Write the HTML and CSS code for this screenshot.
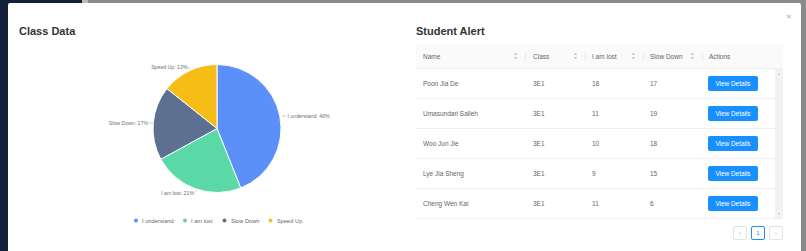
FILE: index.html
```html
<!DOCTYPE html>
<html lang="en">
<head>
    <meta charset="UTF-8">
    <meta name="viewport" content="width=device-width, initial-scale=1.0">
    <title>Class Data</title>
    <link rel="stylesheet" href="styles.css">
</head>
<body>
    <div class="page">
        <div class="sidebar"></div>
        <div class="topbar-edge"></div>
        <div class="main"></div>
    </div>

    <div class="modal">
        <button class="close" aria-label="Close">&#x2715;</button>
        <div class="modal-body">
            <div class="chart-panel">
                <h2>Class Data</h2>
                <svg class="pie" width="397" height="200" viewBox="0 0 397 200">
                    <g transform="translate(-19 -44)">
                        <path d="M217,128.5 L217,64.5 A64,64 0 0 1 240.73,187.94 Z" fill="#5b8ff9" stroke="#fff" stroke-width="1"/>
                        <path d="M217,128.5 L240.73,187.94 A64,64 0 0 1 160.85,159.21 Z" fill="#5ad8a6" stroke="#fff" stroke-width="1"/>
                        <path d="M217,128.5 L160.85,159.21 A64,64 0 0 1 166.96,88.6 Z" fill="#5d7092" stroke="#fff" stroke-width="1"/>
                        <path d="M217,128.5 L166.96,88.6 A64,64 0 0 1 217,64.5 Z" fill="#f6bd16" stroke="#fff" stroke-width="1"/>

                        <g class="leader">
                            <line x1="282" y1="116" x2="286" y2="116"/>
                            <line x1="188" y1="67.5" x2="191" y2="69.5"/>
                            <line x1="149" y1="123" x2="153" y2="123"/>
                            <line x1="195" y1="192.5" x2="197" y2="190.5"/>
                        </g>
                        <g class="label">
                            <text x="287.5" y="118">I understand: 40%</text>
                            <text x="187.5" y="69" text-anchor="end">Speed Up: 13%</text>
                            <text x="148" y="125" text-anchor="end">Slow Down: 17%</text>
                            <text x="194" y="195" text-anchor="end">I am lost: 21%</text>
                        </g>

                        <g class="legend">
                            <circle cx="136" cy="220.5" r="2" fill="#5b8ff9"/>
                            <text x="142" y="222.5">I understand</text>
                            <circle cx="185" cy="220.5" r="2" fill="#5ad8a6"/>
                            <text x="191" y="222.5">I am lost</text>
                            <circle cx="224.5" cy="220.5" r="2" fill="#5d7092"/>
                            <text x="231" y="222.5">Slow Down</text>
                            <circle cx="270.5" cy="220.5" r="2" fill="#f6bd16"/>
                            <text x="277" y="222.5">Speed Up</text>
                        </g>
                    </g>
                </svg>
            </div>

            <div class="alert-panel">
                <h2>Student Alert</h2>
                <div class="table">
                    <div class="thead">
                        <div class="th">Name <span class="sorter"></span></div>
                        <div class="th">Class <span class="sorter"></span></div>
                        <div class="th">I am lost <span class="sorter"></span></div>
                        <div class="th">Slow Down <span class="sorter"></span></div>
                        <div class="th">Actions</div>
                    </div>
                    <div class="tbody">
                        <div class="rows">
                            <div class="tr">
                                <div class="td">Poon Jia De</div>
                                <div class="td">3E1</div>
                                <div class="td">18</div>
                                <div class="td">17</div>
                                <div class="td"><button class="btn">View Details</button></div>
                            </div>
                            <div class="tr">
                                <div class="td">Umasundari Salleh</div>
                                <div class="td">3E1</div>
                                <div class="td">11</div>
                                <div class="td">19</div>
                                <div class="td"><button class="btn">View Details</button></div>
                            </div>
                            <div class="tr">
                                <div class="td">Woo Jun Jie</div>
                                <div class="td">3E1</div>
                                <div class="td">10</div>
                                <div class="td">18</div>
                                <div class="td"><button class="btn">View Details</button></div>
                            </div>
                            <div class="tr">
                                <div class="td">Lye Jia Sheng</div>
                                <div class="td">3E1</div>
                                <div class="td">9</div>
                                <div class="td">15</div>
                                <div class="td"><button class="btn">View Details</button></div>
                            </div>
                            <div class="tr">
                                <div class="td">Cheng Wen Kai</div>
                                <div class="td">3E1</div>
                                <div class="td">11</div>
                                <div class="td">6</div>
                                <div class="td"><button class="btn">View Details</button></div>
                            </div>
                        </div>
                        <div class="scrollbar">
                            <span class="arrow-up"></span>
                            <span class="arrow-down"></span>
                        </div>
                    </div>
                </div>
                <div class="pager">
                    <span class="page-item disabled">&lsaquo;</span>
                    <span class="page-item active">1</span>
                    <span class="page-item disabled">&rsaquo;</span>
                </div>
            </div>
        </div>
    </div>
</body>
</html>
```

FILE: styles.css
```css
html, body {
    margin: 0;
    height: 100%;
    overflow: hidden;
}
body {
    font-family: 'Liberation Sans', Arial, sans-serif;
    background-color: #8a8a8a;
    color: #333;
}
.page {
    display: flex;
    height: 100%;
}
.sidebar {
    width: 82px;
    background-color: #13203a;
}
.topbar-edge {
    width: 6px;
    background-color: #b9b9b9;
}
.main {
    flex: 1;
    background-color: #8a8a8a;
}

/* modal sits over the dimmed page */
.modal {
    position: absolute;
    left: 8px;
    top: 3px;
    width: 793px;
    height: 260px;
    background: #fff;
    border-radius: 2px;
}
.close {
    position: absolute;
    right: 9px;
    top: 9px;
    border: none;
    background: none;
    padding: 0;
    color: #b0b0b0;
    font-size: 7px;
    line-height: 9px;
    cursor: pointer;
}
.modal-body {
    display: flex;
    padding: 22px 18px 0 11px;
}
h2 {
    margin: 0 0 6px;
    font-size: 11px;
    line-height: 13px;
    font-weight: bold;
    color: #333;
}
.chart-panel {
    width: 397px;
}
.pie {
    display: block;
}
.leader line {
    stroke: #aaa;
    stroke-width: 0.6;
}
.label text {
    font-size: 5.2px;
    fill: #6f6f6f;
}
.legend text {
    font-size: 5.7px;
    fill: #666;
}

.alert-panel {
    width: 367px;
}
.table {
    font-size: 6.5px;
    color: #666;
}
.thead {
    display: grid;
    grid-template-columns: 109px 60px 58px 59px 81px;
    height: 25px;
    background-color: #fafafa;
    border-bottom: 1px solid #f0f0f0;
    box-sizing: border-box;
}
.th {
    position: relative;
    display: flex;
    align-items: center;
    justify-content: space-between;
    padding: 0 8px 0 7px;
    color: #666;
}
.th + .th::before {
    content: '';
    position: absolute;
    left: 0;
    top: 8px;
    width: 1px;
    height: 9px;
    background-color: #ececec;
}
.th:nth-child(2) {
    padding-left: 8px;
}
.sorter {
    width: 3px;
    height: 6px;
    display: flex;
    flex-direction: column;
    justify-content: space-between;
}
.sorter::before,
.sorter::after {
    content: '';
    border-left: 1.5px solid transparent;
    border-right: 1.5px solid transparent;
}
.sorter::before {
    border-bottom: 2px solid #c4c4c4;
}
.sorter::after {
    border-top: 2px solid #c4c4c4;
}

.tbody {
    display: flex;
}
.rows {
    width: 359px;
}
.tr {
    display: grid;
    grid-template-columns: 109px 60px 58px 59px 73px;
    height: 30px;
    border-bottom: 1px solid #f0f0f0;
    box-sizing: border-box;
}
.td {
    display: flex;
    align-items: center;
    padding-left: 7px;
}
.td:nth-child(2) {
    padding-left: 8px;
}
.td:last-child {
    padding-left: 6px;
}
.btn {
    width: 50px;
    height: 15px;
    padding: 0;
    border: none;
    border-radius: 2px;
    background-color: #1890ff;
    color: #fff;
    font-family: inherit;
    font-size: 6.4px;
    cursor: pointer;
}
.scrollbar {
    width: 8px;
    background-color: #f1f1f1;
    display: flex;
    flex-direction: column;
    justify-content: space-between;
    align-items: center;
    padding: 5px 0;
    box-sizing: border-box;
}
.arrow-up {
    border-left: 1.5px solid transparent;
    border-right: 1.5px solid transparent;
    border-bottom: 1.5px solid #a3a3a3;
}
.arrow-down {
    border-left: 1.5px solid transparent;
    border-right: 1.5px solid transparent;
    border-top: 1.5px solid #a3a3a3;
}

.pager {
    display: flex;
    justify-content: flex-end;
    gap: 4px;
    margin-top: 7px;
}
.page-item {
    width: 14px;
    height: 14px;
    box-sizing: border-box;
    border: 1px solid #e3e3e3;
    border-radius: 2px;
    display: flex;
    align-items: center;
    justify-content: center;
    font-size: 7px;
    color: #c8c8c8;
}
.page-item.active {
    border-color: #1890ff;
    color: #1890ff;
    font-size: 6px;
}
```
